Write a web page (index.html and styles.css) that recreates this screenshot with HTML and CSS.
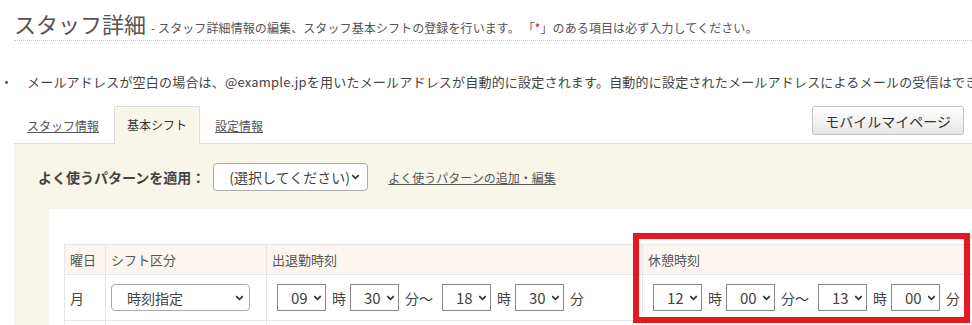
FILE: index.html
```html
<!DOCTYPE html>
<html lang="ja">
<head>
<meta charset="utf-8">
<title>スタッフ詳細</title>
<link rel="stylesheet" href="styles.css">
</head>
<body>
<div class="page">
  <header class="page-head">
    <h1 class="title">スタッフ詳細</h1>
    <span class="subtitle">- スタッフ詳細情報の編集、スタッフ基本シフトの登録を行います。 「<span class="req">*</span>」のある項目は必ず入力してください。</span>
  </header>

  <p class="note"><span class="bullet">・</span>メールアドレスが空白の場合は、@example.jpを用いたメールアドレスが自動的に設定されます。自動的に設定されたメールアドレスによるメールの受信はできません。</p>

  <nav class="tabs">
    <a class="tab" href="#">スタッフ情報</a>
    <span class="tab active">基本シフト</span>
    <a class="tab" href="#">設定情報</a>
    <button class="mobile-btn" type="button">モバイルマイページ</button>
  </nav>

  <section class="panel">
    <div class="pattern-row">
      <span class="pattern-label">よく使うパターンを適用：</span>
      <span class="sel-wrap">
        <select class="sel sel-pattern"><option>(選択してください)</option></select>
        <svg class="chev" viewBox="0 0 10 7" width="9" height="6"><path d="M1.2 1.2 L5 5 L8.8 1.2" /></svg>
      </span>
      <a class="pattern-link" href="#">よく使うパターンの追加・編集</a>
    </div>

    <div class="sheet">
      <table class="shift-table">
        <colgroup>
          <col class="c-day">
          <col class="c-kind">
          <col class="c-work">
          <col class="c-break">
        </colgroup>
        <thead>
          <tr>
            <th>曜日</th>
            <th>シフト区分</th>
            <th>出退勤時刻</th>
            <th>休憩時刻</th>
          </tr>
        </thead>
        <tbody>
          <tr>
            <td class="day">月</td>
            <td>
              <span class="sel-wrap">
                <select class="sel sel-kind"><option>時刻指定</option></select>
                <svg class="chev" viewBox="0 0 10 7" width="9" height="6"><path d="M1.2 1.2 L5 5 L8.8 1.2" /></svg>
              </span>
            </td>
            <td class="time-cell">
              <div class="time-row">
                <span class="sel-wrap tw"><select class="sel sel-time"><option>09</option></select><svg class="chev" viewBox="0 0 10 7" width="9" height="6"><path d="M1.2 1.2 L5 5 L8.8 1.2" /></svg></span>
                <span class="unit">時</span>
                <span class="sel-wrap tw"><select class="sel sel-time"><option>30</option></select><svg class="chev" viewBox="0 0 10 7" width="9" height="6"><path d="M1.2 1.2 L5 5 L8.8 1.2" /></svg></span>
                <span class="unit unit-range">分～</span>
                <span class="sel-wrap tw"><select class="sel sel-time"><option>18</option></select><svg class="chev" viewBox="0 0 10 7" width="9" height="6"><path d="M1.2 1.2 L5 5 L8.8 1.2" /></svg></span>
                <span class="unit">時</span>
                <span class="sel-wrap tw"><select class="sel sel-time"><option>30</option></select><svg class="chev" viewBox="0 0 10 7" width="9" height="6"><path d="M1.2 1.2 L5 5 L8.8 1.2" /></svg></span>
                <span class="unit">分</span>
              </div>
            </td>
            <td class="time-cell">
              <div class="time-row">
                <span class="sel-wrap tw"><select class="sel sel-time"><option>12</option></select><svg class="chev" viewBox="0 0 10 7" width="9" height="6"><path d="M1.2 1.2 L5 5 L8.8 1.2" /></svg></span>
                <span class="unit">時</span>
                <span class="sel-wrap tw"><select class="sel sel-time"><option>00</option></select><svg class="chev" viewBox="0 0 10 7" width="9" height="6"><path d="M1.2 1.2 L5 5 L8.8 1.2" /></svg></span>
                <span class="unit unit-range">分～</span>
                <span class="sel-wrap tw"><select class="sel sel-time"><option>13</option></select><svg class="chev" viewBox="0 0 10 7" width="9" height="6"><path d="M1.2 1.2 L5 5 L8.8 1.2" /></svg></span>
                <span class="unit">時</span>
                <span class="sel-wrap tw"><select class="sel sel-time"><option>00</option></select><svg class="chev" viewBox="0 0 10 7" width="9" height="6"><path d="M1.2 1.2 L5 5 L8.8 1.2" /></svg></span>
                <span class="unit">分</span>
              </div>
            </td>
          </tr>
          <tr class="next-row">
            <td></td><td></td><td></td><td></td>
          </tr>
        </tbody>
      </table>
    </div>
  </section>
</div>

<div class="highlight" aria-hidden="true"></div>
</body>
</html>
```

FILE: styles.css
```css
* {
  box-sizing: border-box;
}

html, body {
  margin: 0;
  padding: 0;
  height: 100%;
}

body {
  position: relative;
  overflow: hidden;
  background: #fff;
  color: #444;
  font-family: "Noto Sans CJK JP", "Noto Sans", sans-serif;
  font-size: 13px;
}

.page {
  padding-left: 14px;
  height: 100%;
  display: flex;
  flex-direction: column;
}

/* ---------- header ---------- */
.page-head {
  margin-top: 8px;
  padding-bottom: 2px;
  display: flex;
  align-items: baseline;
  border-bottom: 1px dotted #c8c8c8;
}

.title {
  margin: 0;
  font-size: 22px;
  line-height: 30px;
  font-weight: normal;
  color: #555;
}

.subtitle {
  margin-left: 5px;
  font-size: 12px;
  letter-spacing: 0.1px;
  color: #555;
  white-space: nowrap;
}

.req {
  color: #e60012;
}

/* ---------- note ---------- */
.note {
  margin: 31px 0 0 -14px;
  font-size: 13px;
  line-height: 20px;
  letter-spacing: 0.2px;
  color: #444;
  white-space: nowrap;
}

.bullet {
  display: inline-block;
  width: 27px;
}

/* ---------- tabs ---------- */
.tabs {
  margin-top: 14px;
  padding-right: 8px;
  display: flex;
  align-items: flex-end;
  border-bottom: 1px solid #ddd;
}

.tab {
  height: 37px;
  line-height: 37px;
  padding: 0 12px;
  margin-right: 2px;
  border: 1px solid transparent;
  border-bottom: 0;
  font-size: 12px;
  color: #555;
  text-decoration: underline;
}

.tab.active {
  height: 38px;
  line-height: 36px;
  margin-bottom: -1px;
  border-color: #ddd;
  background: #f8f5eb;
  color: #333;
  text-decoration: none;
}

.mobile-btn {
  margin-left: auto;
  align-self: flex-start;
  height: 29px;
  padding: 0 12px;
  font-family: inherit;
  font-size: 14px;
  color: #333;
  border: 1px solid #c6c6c6;
  border-radius: 2px;
  background: linear-gradient(#ffffff, #e7e7e7);
}

/* ---------- panel ---------- */
.panel {
  flex: 1;
  background: #f8f5eb;
  padding: 19px 0 0 24px;
  display: flex;
  flex-direction: column;
}

.pattern-row {
  display: flex;
  align-items: center;
  height: 28px;
}

.pattern-label {
  font-size: 14px;
  font-weight: bold;
  color: #444;
}

.pattern-row .sel-wrap {
  margin-left: 8px;
}

.pattern-link {
  margin-left: 20px;
  font-size: 12px;
  color: #555;
}

/* ---------- selects ---------- */
.sel-wrap {
  position: relative;
  display: inline-flex;
}

.sel {
  -webkit-appearance: none;
  appearance: none;
  margin: 0;
  font-family: inherit;
  color: #444;
  background: #fff;
}

.chev {
  position: absolute;
  top: 50%;
  right: 5px;
  margin-top: -3px;
  fill: none;
  stroke: #333;
  stroke-width: 2;
  pointer-events: none;
}

.sel-pattern {
  width: 155px;
  height: 28px;
  padding: 0 0 0 15px;
  font-size: 14px;
  border: 1px solid #aaa;
  border-radius: 4px;
}

.sel-pattern + .chev {
  right: 8px;
}

.sel-kind {
  width: 139px;
  height: 27px;
  padding: 0 0 0 15px;
  font-size: 14px;
  border: 1px solid #aaa;
  border-radius: 4px;
}

.sel-kind + .chev {
  right: 6px;
}

.sel-time {
  width: 49px;
  height: 27px;
  padding: 0 0 0 13px;
  font-size: 15px;
  border: 1px solid #888;
  border-radius: 0;
}

.sel-time + .chev {
  right: 4px;
}

/* ---------- sheet / table ---------- */
.sheet {
  flex: 1;
  margin: 18px 0 0 11px;
  padding: 35px 0 0 15px;
  background: #fff;
}

.shift-table {
  border-collapse: collapse;
  table-layout: fixed;
  width: 920px;
  color: #555;
}

.c-day { width: 41px; }
.c-kind { width: 161px; }
.c-work { width: 376px; }
.c-break { width: 342px; }

.shift-table th,
.shift-table td {
  border: 1px solid #e6e6e6;
  padding: 0 5px;
  text-align: left;
  vertical-align: middle;
}

.shift-table th {
  height: 30px;
  font-size: 13px;
  font-weight: normal;
  background: #fdf5f0;
}

.shift-table td {
  height: 46px;
  font-size: 14px;
  color: #444;
}

.shift-table td.time-cell {
  padding-left: 10px;
}

.time-row {
  display: flex;
  align-items: center;
  white-space: nowrap;
}

.time-row .tw {
  margin-right: 6px;
}

.unit {
  margin-right: 4px;
  font-size: 14px;
}

.unit-range {
  margin-right: 9px;
}

.next-row td {
  height: 20px;
}

/* ---------- annotation ---------- */
.highlight {
  position: absolute;
  left: 633px;
  top: 233px;
  width: 337px;
  height: 90px;
  border: 6px solid #e5171f;
  pointer-events: none;
}
```
